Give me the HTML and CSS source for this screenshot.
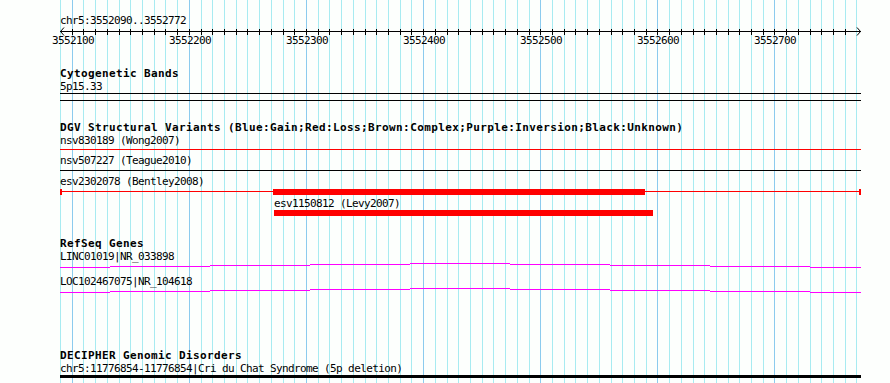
FILE: index.html
```html
<!DOCTYPE html>
<html lang="en">
<head>
    <meta charset="UTF-8">
    <title>chr5:3552090..3552772</title>
    <link rel="stylesheet" href="styles.css">
</head>
<body>

    <div class="browser">
        <!-- Grid lines every 10 bp, drawn by the script below -->
        <svg class="grid" id="grid" width="890" height="383"></svg>

        <!-- Ruler -->
        <section class="track ruler">
            <div class="feature-label">chr5:3552090..3552772</div>
            <svg class="glyph" id="ruler" width="890" height="20">
                <path d="M60 4.5H861" stroke="#000"/>
                <polyline points="64,0.5 60.5,4.5 64,8.5" fill="none" stroke="#000"/>
                <polyline points="857,0.5 860.5,4.5 857,8.5" fill="none" stroke="#000"/>
            </svg>
        </section>

        <!-- Cytogenetic Bands -->
        <section class="track cyto">
            <div class="track-title">Cytogenetic Bands</div>
            <div class="feature-label">5p15.33</div>
            <svg class="glyph" width="890" height="8">
                <rect x="60" y="0" width="801" height="1" fill="#000"/>
                <rect x="60" y="7" width="801" height="1" fill="#000"/>
            </svg>
        </section>

        <!-- DGV Structural Variants -->
        <section class="track dgv">
            <div class="track-title">DGV Structural Variants (Blue:Gain;Red:Loss;Brown:Complex;Purple:Inversion;Black:Unknown)</div>

            <div class="feature-label">nsv830189 (Wong2007)</div>
            <svg class="glyph" width="890" height="8">
                <rect x="60" y="2" width="801" height="1" fill="#f00"/>
            </svg>

            <div class="feature-label">nsv507227 (Teague2010)</div>
            <svg class="glyph" width="890" height="9">
                <rect x="60" y="3" width="801" height="1" fill="#000"/>
            </svg>

            <div class="feature-label">esv2302078 (Bentley2008)</div>
            <svg class="glyph" width="890" height="10">
                <rect x="60" y="3" width="801" height="1" fill="#f00"/>
                <rect x="60" y="1" width="2" height="6" fill="#f00"/>
                <rect x="859" y="1" width="2" height="6" fill="#f00"/>
                <rect x="273" y="1" width="372" height="6" fill="#f00"/>
            </svg>

            <div class="feature-label" style="padding-left: 274px;">esv1150812 (Levy2007)</div>
            <svg class="glyph" width="890" height="6">
                <rect x="274" y="0" width="379" height="6" fill="#f00"/>
            </svg>
        </section>

        <!-- RefSeq Genes -->
        <section class="track refseq">
            <div class="track-title">RefSeq Genes</div>

            <div class="feature-label">LINC01019|NR_033898</div>
            <svg class="glyph" width="890" height="13">
                <path class="gene" d="M60 4.5H110M110 3.5H210M210 2.5H310M310 1.5H410M410 0.5H510M510 1.5H610M610 2.5H710M710 3.5H810M810 4.5H861"/>
            </svg>

            <div class="feature-label">LOC102467075|NR_104618</div>
            <svg class="glyph" width="890" height="5">
                <path class="gene" d="M60 4.5H110M110 3.5H210M210 2.5H310M310 1.5H410M410 0.5H510M510 1.5H610M610 2.5H710M710 3.5H810M810 4.5H861"/>
            </svg>
        </section>

        <!-- DECIPHER Genomic Disorders -->
        <section class="track decipher">
            <div class="track-title">DECIPHER Genomic Disorders</div>
            <div class="feature-label">chr5:11776854-11776854|Cri du Chat Syndrome (5p deletion)</div>
            <svg class="glyph" width="890" height="3">
                <rect x="60" y="0" width="801" height="3" fill="#000"/>
            </svg>
        </section>
    </div>

    <script>
        const start = 3552090;
        const scale = 800 / 683;
        const ns = 'http://www.w3.org/2000/svg';

        // bp -> pixel column
        function px(bp) {
            return Math.round(60 + (bp - start) * scale);
        }

        function add(svg, tag, attrs, text) {
            const el = document.createElementNS(ns, tag);
            for (const k in attrs) el.setAttribute(k, attrs[k]);
            if (text) el.textContent = text;
            svg.appendChild(el);
        }

        // Grid
        const grid = document.getElementById('grid');
        for (let bp = start; bp <= 3552770; bp += 10) {
            const major = bp % 100 === 0;
            add(grid, 'rect', {
                x: px(bp), y: 0, width: 1, height: 383,
                fill: major ? '#8ccbee' : '#a8ebf1'
            });
        }

        // Ruler ticks and numbers
        const ruler = document.getElementById('ruler');
        for (let bp = 3552100; bp <= 3552760; bp += 10) {
            const x = px(bp);
            add(ruler, 'rect', { x: x, y: 2, width: 1, height: 6, fill: '#000' });
            if (bp % 100 === 0) {
                add(ruler, 'text', { x: x + 1, y: 17, 'text-anchor': 'middle', class: 'tick-num' }, String(bp));
            }
        }
    </script>
</body>
</html>
```

FILE: styles.css
```css
/* General Styles */
body {
    margin: 0;
    background: #fdfffd;
    color: #000;
    font-family: 'DejaVu Sans Mono', 'Liberation Mono', monospace;
}

.browser {
    position: relative;
    display: flow-root;
    width: 890px;
    height: 383px;
    overflow: hidden;
}

/* Grid behind the tracks */
.grid {
    position: absolute;
    top: 0;
    left: 0;
    shape-rendering: crispEdges;
}

/* Tracks */
.track {
    position: relative;
}

.ruler {
    margin-top: 15px;
}

.cyto {
    margin-top: 21px;
}

.dgv {
    margin-top: 21px;
}

.refseq {
    margin-top: 22px;
}

.decipher {
    margin-top: 57px;
}

.track-title {
    font-weight: bold;
    font-size: 11px;
    letter-spacing: 0.38px;
    line-height: 12px;
    margin-bottom: 1px;
    padding-left: 60px;
    white-space: nowrap;
}

.feature-label {
    font-size: 11px;
    letter-spacing: -0.62px;
    line-height: 12px;
    padding-left: 60px;
    white-space: nowrap;
}

/* Glyphs */
.glyph {
    display: block;
    shape-rendering: crispEdges;
}

.glyph polyline {
    shape-rendering: auto;
}

.gene {
    fill: none;
    stroke: #ff00ff;
    stroke-width: 1;
}

.tick-num {
    font-family: 'DejaVu Sans Mono', 'Liberation Mono', monospace;
    font-size: 11px;
    letter-spacing: -0.62px;
    fill: #000;
}
```
